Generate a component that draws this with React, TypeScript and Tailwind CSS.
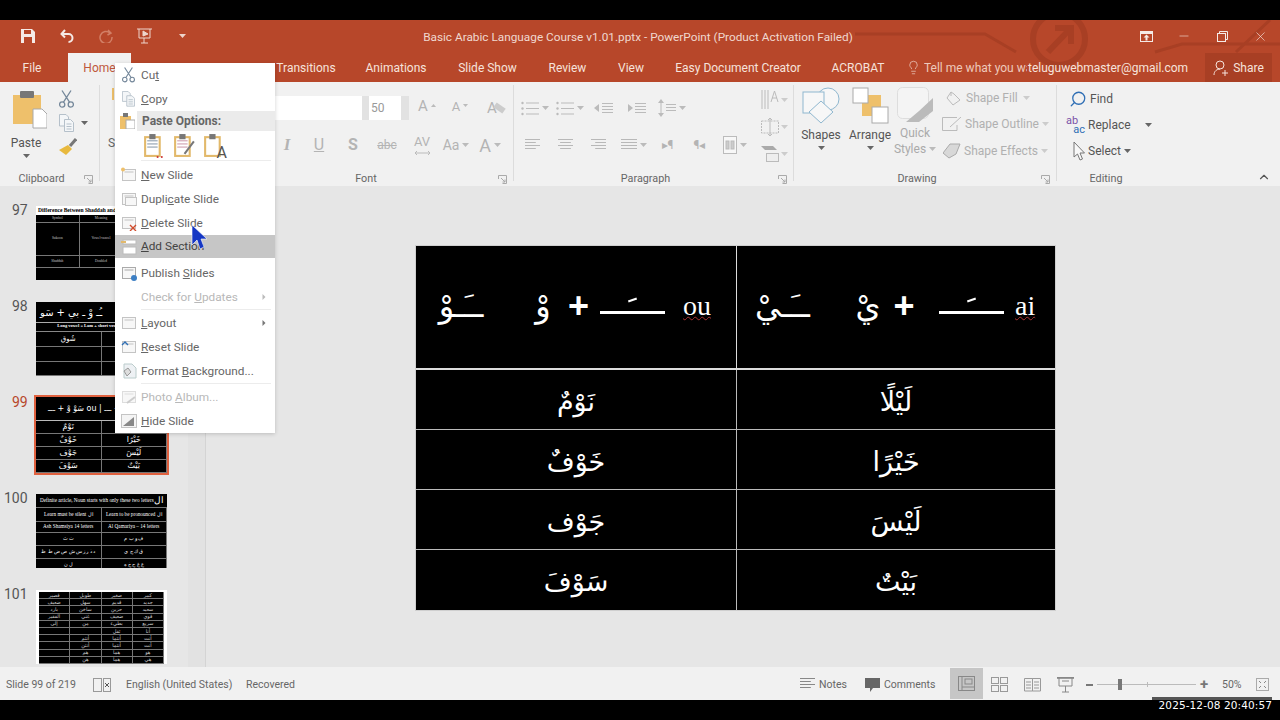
import React from "react";
import { Search, Lightbulb, Minus, X, ChevronUp, ChevronRight } from "lucide-react";

const UI = "[font-family:'Roboto','Open_Sans',sans-serif]";

const Caret = ({ c = "#666" }: { c?: string }) => (
  <svg width="7" height="4" viewBox="0 0 7 4" className="shrink-0"><path d="M0 0h7L3.5 4z" fill={c} /></svg>
);

const Launcher = () => (
  <svg width="9" height="9" viewBox="0 0 9 9" className="shrink-0"><path d="M.5 4V.5H8.5M8.5.5V8.5H4.5M3 3l4 4M4.5 7H7V4.5" fill="none" stroke="#aaa" /></svg>
);

const Lines = ({ w = 16, n = 4, c = "#b8b8b8", gap = 3, align = "left" }: { w?: number; n?: number; c?: string; gap?: number; align?: string }) => (
  <svg width={w} height={n * gap + 1} viewBox={`0 0 ${w} ${n * gap + 1}`}>
    {Array.from({ length: n }).map((_, i) => {
      const l = i % 2 ? w * 0.72 : w;
      const x = align === "right" ? w - l : align === "center" ? (w - l) / 2 : 0;
      return <rect key={i} x={x} y={i * gap} width={align === "full" ? w : l} height="1" fill={c} />;
    })}
  </svg>
);

const Bullets = () => (
  <svg width="18" height="15" viewBox="0 0 18 15" fill="#bbb">
    <circle cx="1.5" cy="2" r="1.2" /><circle cx="1.5" cy="7.5" r="1.2" /><circle cx="1.5" cy="13" r="1.2" />
    <rect x="5" y="1.5" width="13" height="1" /><rect x="5" y="7" width="13" height="1" /><rect x="5" y="12.5" width="13" height="1" />
  </svg>
);

const ScissorsIcon = ({ s = 18 }: { s?: number }) => (
  <svg width={s} height={s * 1.2} viewBox="0 0 15 18" fill="none" stroke="#74879a" strokeWidth="1.3">
    <circle cx="3.2" cy="14.5" r="2.6" /><circle cx="11.8" cy="14.5" r="2.6" />
    <path d="M4.5 12.2L12 .5M10.5 12.2L3 .5" />
  </svg>
);

const CopyIcon = ({ s = 17 }: { s?: number }) => (
  <svg width={s} height={s * 1.2} viewBox="0 0 15 18" fill="#f4f6f8" stroke="#b5c0ca">
    <path d="M.5.5H7L9.5 3V12H.5Z" /><path d="M5.5 5.5H11.5L14.5 8.5V17.5H5.5Z" />
    <path d="M7.5 10H12.5M7.5 12.5H12.5M7.5 15H12.5" />
  </svg>
);

const Clip = ({ children, w = 20, h = 24, fill = "#fff" }: { children?: React.ReactNode; w?: number; h?: number; fill?: string }) => (
  <svg width={w} height={h} viewBox="0 0 20 24">
    <rect x="1" y="4" width="14" height="18" fill={fill} stroke="#e2b96b" strokeWidth="2" />
    <rect x="5" y="1" width="6" height="5" fill="#777" />
    {children}
  </svg>
);

function Tab({ w, children, cls = "" }: { w: string; children: React.ReactNode; cls?: string }) {
  return <div className={`${w} h-full flex items-center justify-center shrink-0 whitespace-nowrap ${cls}`}>{children}</div>;
}

function Header() {
  return (
    <div className="relative h-[62px] bg-[#b7472a] shrink-0 text-[#f6e3dc] overflow-hidden">
      <svg className="absolute left-0 top-0 pointer-events-none" width="1280" height="62" viewBox="0 0 1280 62" fill="none" stroke="#a83f24">
        <path d="M855 14H985L1016 32" strokeWidth="3" />
        <circle cx="1059" cy="19" r="26" strokeWidth="6" />
        <path d="M1048 32L1070 9M1055 8H1071V24" strokeWidth="6" />
        <path d="M1155 32L1182 24H1280M1236 32L1270 0" strokeWidth="3" />
      </svg>
      <div className="relative h-8 flex items-center">
        <div className="w-[56px] flex justify-center">
          <svg width="14" height="14" viewBox="0 0 14 14"><path d="M0 0H11L14 3V14H0Z" fill="#f5eae6" /><rect x="3" y="1" width="7" height="4" fill="#b7472a" /><rect x="3" y="8" width="8" height="6" fill="#b7472a" /></svg>
        </div>
        <div className="w-[22px] flex justify-center">
          <svg width="14" height="14" viewBox="0 0 14 14" fill="none" stroke="#f5eae6" strokeWidth="2"><path d="M5 1L1.5 5 5 8.5M2 5H8.5A4 4 0 0 1 8.5 13" /></svg>
        </div>
        <div className="w-[56px] flex justify-center">
          <svg width="14" height="14" viewBox="0 0 14 14" fill="none" stroke="#d27f66" strokeWidth="1.5"><path d="M9 1L12 4 8.5 6M11 4A6 6 0 1 0 13 8" /></svg>
        </div>
        <div className="w-[22px] flex justify-center">
          <svg width="16" height="16" viewBox="0 0 16 16" fill="none" stroke="#eed5cc"><path d="M0 1H15M2 1V10H13V1M7 10V15M4 15H11" /><path d="M6 3L11 6 6 8Z" fill="#eed5cc" /></svg>
        </div>
        <div className="w-[52px] flex justify-center"><Caret c="#eed5cc" /></div>
        <div className={`absolute left-[403px] w-[470px] top-[9px] text-center text-[11.8px] leading-4 ${UI} text-[#f0d8cf] whitespace-nowrap`}>Basic Arabic Language Course v1.01.pptx - PowerPoint (Product Activation Failed)</div>
        <div className="ml-auto flex items-center pr-[1px]">
          <div className="w-[38px] flex justify-center"><svg width="13" height="11" viewBox="0 0 13 11"><rect x=".5" y=".5" width="12" height="10" fill="none" stroke="#f5eae6" /><rect x="0" y="0" width="13" height="3" fill="#f5eae6" /><path d="M6.5 3.5L9.5 6.5H7.5V9.5H5.5V6.5H3.5Z" fill="#f5eae6" /></svg></div>
          <div className="w-[38px] flex justify-center"><Minus size={14} strokeWidth={1} color="#f5eae6" /></div>
          <div className="w-[38px] flex justify-center"><svg width="11" height="11" viewBox="0 0 11 11" fill="none" stroke="#f5eae6"><rect x=".5" y="2.5" width="8" height="8" /><path d="M2.5 2.5V.5H10.5V8.5H8.5" /></svg></div>
          <div className="w-[38px] flex justify-center"><X size={15} strokeWidth={1} color="#f5eae6" /></div>
        </div>
      </div>
      <div className={`relative h-[30px] flex items-center text-[12px] pt-px ${UI}`}>
        <Tab w="w-[64px]">File</Tab>
        <Tab w="w-[63px]" cls="bg-[#f1f1f1] text-[#c0583c] ml-[4px]">Home</Tab>
        <Tab w="w-[65px]">Insert</Tab>
        <Tab w="w-[66px]">Design</Tab>
        <Tab w="w-[88px]">Transitions</Tab>
        <Tab w="w-[92px]">Animations</Tab>
        <Tab w="w-[91px]">Slide Show</Tab>
        <Tab w="w-[69px]">Review</Tab>
        <Tab w="w-[58px]">View</Tab>
        <Tab w="w-[156px]">Easy Document Creator</Tab>
        <Tab w="w-[84px]">ACROBAT</Tab>
        <div className="ml-[2px] w-[22px] flex justify-center"><Lightbulb size={15} strokeWidth={1} /></div>
        <div className="w-[103px] mr-px whitespace-nowrap overflow-hidden text-[#eec9bc]">Tell me what you want to do</div>
        <div className="w-[177px] whitespace-nowrap">teluguwebmaster@gmail.com</div>
        <div className="w-[67px] h-full bg-[#a83f24] flex items-center justify-center gap-[4px]">
          <svg width="16" height="16" viewBox="0 0 16 16" fill="none" stroke="#f6e3dc"><circle cx="7" cy="5" r="4" /><path d="M1 15C1 11 4 9 7 9.2M9 13H15M12 10V16" /></svg>
          Share
        </div>
      </div>
    </div>
  );
}

const Sep = () => <div className="w-px h-[96px] bg-[#dcdcdc] self-start mt-[3px] shrink-0" />;

function Group({ w, label, children, launcher = true, lcls = "" }: { w: string; label: string; children: React.ReactNode; launcher?: boolean; lcls?: string }) {
  return (
    <div className={`${w} shrink-0 flex flex-col h-full relative`}>
      <div className="h-[91px] flex overflow-hidden">{children}</div>
      <div className={`h-[12px] flex items-center justify-center text-[#666] text-[10.8px] relative ${lcls}`}>
        {label}
        {launcher && <div className="absolute right-[6px] top-[2px]"><Launcher /></div>}
      </div>
    </div>
  );
}

const Dis = ({ children, w, cls = "" }: { children: React.ReactNode; w: string; cls?: string }) => (
  <div className={`${w} h-[26px] flex items-center justify-center gap-[3px] shrink-0 text-[#b4b4b4] ${cls}`}>{children}</div>
);

function Ribbon() {
  return (
    <div className={`h-[104px] bg-[#f1f1f1] flex shrink-0 pb-[1px] ${UI}`}>
      <Group w="w-[99px]" label="Clipboard" lcls="pr-[16px]">
        <div className="w-[59px] flex flex-col items-center pt-2 shrink-0">
          <svg width="34" height="39" viewBox="0 0 34 39"><path d="M0 5H28V34H0Z" fill="#eec06b" /><rect x="7" y="1" width="14" height="7" rx="1" fill="#777" /><path d="M20 19H29L34 24V38H20Z" fill="#fff" stroke="#aaa" /></svg>
          <div className="text-[12px] text-[#555] mt-[6px] leading-4 -ml-[7px]">Paste</div>
          <div className="mt-[3px] -ml-[7px]"><Caret /></div>
        </div>
        <div className="flex flex-col items-start pt-[8px] gap-[6px]">
          <ScissorsIcon s={15} />
          <div className="flex items-center gap-[7px]"><CopyIcon s={15} /><Caret /></div>
          <svg width="18" height="17" viewBox="0 0 18 17"><path d="M0 12L9 7 13 11 7 17Z" fill="#e8b93e" /><path d="M11 8L17 1" stroke="#777" strokeWidth="3" /></svg>
        </div>
      </Group>
      <Sep />
      <Group w="w-[118px]" label="Slides" launcher={false}>
        <div className="pl-2 pt-[5px] text-[#666] text-[12px]">
          <svg width="24" height="20" viewBox="0 0 24 20" fill="none"><path d="M5 1L5 13" stroke="#eec06b" strokeWidth="2" /></svg>
          <div className="mt-[27px]">Slides</div>
        </div>
      </Group>
      <Sep />
      <Group w="w-[294px]" label="Font">
        <div className="flex flex-col pl-[20px] pt-[13px] gap-[11px]">
          <div className="flex items-center h-[26px]">
            <div className="w-[123px] h-[24px] bg-white shrink-0" />
            <div className="w-[7px] h-[24px] bg-[#e2e2e2] shrink-0" />
            <div className="w-[32px] h-[24px] bg-white text-[#999] text-[12px] flex items-center pl-[2px] shrink-0">50</div>
            <div className="w-[8px] h-[24px] bg-[#e2e2e2] shrink-0" />
            <Dis w="w-[36px]" cls="text-[15px] items-end pb-[4px] gap-0">A<span className="mb-[10px]"><svg width="5" height="3" viewBox="0 0 5 3"><path d="M0 3L2.5 0 5 3Z" fill="#bbb" /></svg></span></Dis>
            <Dis w="w-[30px]" cls="text-[13px] items-end pb-[5px] gap-0">A<span className="mb-[9px]"><svg width="5" height="3" viewBox="0 0 5 3"><path d="M0 0L2.5 3 5 0Z" fill="#bbb" /></svg></span></Dis>
            <Dis w="w-[34px]" cls="text-[15px]"><span className="relative">A<span className="absolute left-[7px] top-[8px] w-[11px] h-[6px] bg-[#ccc] rotate-[35deg]" /></span></Dis>
          </div>
          <div className="flex items-center h-[26px]">
            <Dis w="w-[32px]" cls="font-bold text-[15px]">B</Dis>
            <Dis w="w-[32px]" cls="italic font-bold text-[17px] [font-family:'Liberation_Serif',serif]">I</Dis>
            <Dis w="w-[32px]" cls="underline text-[16px]">U</Dis>
            <Dis w="w-[36px]" cls="font-bold text-[16px]">S</Dis>
            <Dis w="w-[32px]" cls="line-through text-[12px]">abc</Dis>
            <Dis w="w-[38px]" cls="text-[13px] flex-col gap-0"><span className="leading-[13px]">AV</span><svg width="17" height="4" viewBox="0 0 17 4" fill="none" stroke="#bbb"><path d="M1 2H16M3 0L1 2 3 4M14 0L16 2 14 4" /></svg></Dis>
            <Dis w="w-[30px]" cls="text-[14px]">Aa<Caret c="#bbb" /></Dis>
            <Dis w="w-[38px]" cls="text-[18px]">A<Caret c="#bbb" /></Dis>
          </div>
        </div>
      </Group>
      <Sep />
      <Group w="w-[279px]" label="Paragraph" lcls="pr-[16px]">
        <div className="w-[247px] shrink-0 flex flex-col pt-[13px] gap-[11px] pl-[3px]">
          <div className="flex items-center h-[26px]">
            <Dis w="w-[36px]"><Bullets /><Caret c="#bbb" /></Dis>
            <Dis w="w-[33px]"><Bullets /><Caret c="#bbb" /></Dis>
            <Dis w="w-[34px]"><svg width="19" height="13" viewBox="0 0 19 13" fill="#bbb"><path d="M0 6L5 2V10Z" /><rect x="8" y="1" width="11" height="1" /><rect x="8" y="4" width="11" height="1" /><rect x="8" y="7" width="11" height="1" /><rect x="8" y="10" width="11" height="1" /></svg></Dis>
            <Dis w="w-[33px]"><svg width="19" height="13" viewBox="0 0 19 13" fill="#bbb"><path d="M6 6L1 2V10Z" /><rect x="8" y="1" width="11" height="1" /><rect x="8" y="4" width="11" height="1" /><rect x="8" y="7" width="11" height="1" /><rect x="8" y="10" width="11" height="1" /></svg></Dis>
            <Dis w="w-[38px]"><svg width="18" height="18" viewBox="0 0 18 18" fill="#bbb"><path d="M3 0L6 4H0ZM3 18L6 14H0Z" /><rect x="2.5" y="3" width="1" height="12" /><rect x="8" y="5" width="10" height="1" /><rect x="8" y="8" width="10" height="1" /><rect x="8" y="11" width="10" height="1" /></svg><Caret c="#bbb" /></Dis>
          </div>
          <div className="flex items-center h-[26px] -ml-px">
            <Dis w="w-[33px]"><Lines w={15} n={4} /></Dis>
            <Dis w="w-[33px]"><Lines w={15} n={4} align="center" /></Dis>
            <Dis w="w-[33px]"><Lines w={15} n={4} align="right" /></Dis>
            <Dis w="w-[37px]"><Lines w={16} n={4} align="full" /><Caret c="#bbb" /></Dis>
            <Dis w="w-[31px]"><span className="text-[12px]">▸¶</span></Dis>
            <Dis w="w-[33px]"><span className="text-[12px]">¶◂</span></Dis>
            <Dis w="w-[37px]"><svg width="14" height="18" viewBox="0 0 14 18" fill="#ccc" stroke="#bbb"><rect x=".5" y=".5" width="13" height="17" fill="#f7f7f7" /><rect x="3" y="5" width="3" height="8" /><rect x="8" y="5" width="3" height="8" /></svg><Caret c="#bbb" /></Dis>
          </div>
        </div>
        <div className="flex flex-col items-start gap-[5px] pt-[7px]">
          <div className="flex items-center gap-[2px] h-[22px]"><svg width="18" height="20" viewBox="0 0 18 20" stroke="#bbb" fill="none"><path d="M1 0V19M4 0V19M7 0V19" /><path d="M10 12L13.5 1 17 12M11 8H16" /></svg><Caret c="#ccc" /></div>
          <div className="flex items-center gap-[2px] h-[22px]"><svg width="18" height="20" viewBox="0 0 18 20" fill="none" stroke="#bbb"><rect x=".5" y="4" width="17" height="12" strokeDasharray="2 1" /><path d="M9 1V19M7 3L9 1 11 3M7 17L9 19 11 17" /></svg><Caret c="#ccc" /></div>
          <div className="flex items-center gap-[2px] h-[22px]"><svg width="18" height="16" viewBox="0 0 18 16"><path d="M0 0H12L16 4H4Z" fill="#aaa" /><rect x="5.5" y="7.5" width="12" height="8" fill="#eee" stroke="#bbb" /></svg><Caret c="#ccc" /></div>
        </div>
      </Group>
      <Sep />
      <Group w="w-[262px]" label="Drawing" lcls="pr-[16px]">
        <div className="w-[54px] flex flex-col items-center pt-[5px] text-[#555] text-[12px] shrink-0">
          <svg width="38" height="37" viewBox="0 0 38 37" fill="#f7f7f7" stroke="#8fb7cf"><circle cx="26" cy="12" r="11" /><rect x="1" y="5" width="21" height="21" /><path d="M19 14L31 25 19 36 7 25Z" /></svg>
          <div className="leading-4 mt-[3px]">Shapes</div>
          <div className="mt-[3px]"><Caret /></div>
        </div>
        <div className="w-[40px] ml-[2px] flex flex-col items-center pt-[5px] text-[#555] text-[12px] shrink-0">
          <svg width="37" height="37" viewBox="0 0 37 37" className="shrink-0"><rect x="10" y="8" width="19" height="21" fill="#eec06b" /><rect x="1" y="1" width="15" height="15" fill="#fff" stroke="#aaa" /><rect x="20" y="20" width="16" height="16" fill="#fff" stroke="#aaa" /></svg>
          <div className="leading-4 mt-[3px]">Arrange</div>
          <div className="mt-[3px]"><Caret /></div>
        </div>
        <div className="w-[46px] ml-[2px] flex flex-col items-center pt-[5px] text-[#aaa] text-[12px] shrink-0">
          <svg width="36" height="35" viewBox="0 0 36 35"><rect x=".5" y=".5" width="31" height="31" rx="5" fill="#f4f4f4" stroke="#ddd" /><path d="M9 35L22 24 36 11V24L22 35Z" fill="#bbb" /></svg>
          <div className="leading-4 mt-[3px]">Quick</div>
          <div className="leading-4 flex items-center gap-[3px]">Styles<Caret c="#bbb" /></div>
        </div>
        <div className="flex flex-col pl-[8px] pt-[3px] text-[#b0b0b0] text-[12px] whitespace-nowrap">
          <div className="h-[26px] flex items-center gap-[5px]"><svg width="15" height="15" viewBox="0 0 15 15" fill="none" stroke="#bbb"><path d="M5 1L1 7 7 14 14 9 8 3ZM5 1V5" /></svg>Shape Fill<Caret c="#ccc" /></div>
          <div className="h-[26px] flex items-center gap-[3px] -ml-[4px]"><svg width="20" height="14" viewBox="0 0 20 14" fill="none" stroke="#bbb"><path d="M15 .5H.5V13.5H15V8M8 10L19 0" /></svg>Shape Outline<Caret c="#ccc" /></div>
          <div className="h-[28px] flex items-center gap-[3px] -ml-[3px]"><svg width="18" height="16" viewBox="0 0 18 16"><path d="M0 10L7 1H17L13 11 6 15Z" fill="#d8d8d8" stroke="#aaa" /></svg>Shape Effects<Caret c="#ccc" /></div>
        </div>
      </Group>
      <Sep />
      <Group w="w-[98px]" label="Editing" launcher={false}>
        <div className="flex flex-col pl-[9px] pt-[4px] text-[#555] text-[12px] whitespace-nowrap">
          <div className="h-[26px] flex items-center gap-[3px] pl-[3px]"><Search size={18} color="#2f6fb5" className="-scale-x-100" strokeWidth={1.7} />Find</div>
          <div className="h-[26px] flex items-center gap-[3px]">
            <div className="w-[19px] leading-[9px] text-[11px]"><div className="text-[#7b52a8]">ab</div><div className="text-[#2f6fb5] text-right">ac</div></div>
            Replace<div className="ml-[11px]"><Caret /></div>
          </div>
          <div className="h-[26px] flex items-center gap-[3px] pl-[7px]"><svg width="12" height="20" viewBox="0 0 12 20" fill="#f8f8f8" stroke="#777"><path d="M1 1V16L4.5 13 7 19 9.5 18 7 12H11.5Z" /></svg>Select<Caret /></div>
        </div>
      </Group>
      <div className="flex-1 flex items-end justify-end pr-[9px] pb-[1px]"><ChevronUp size={14} color="#555" /></div>
    </div>
  );
}

const AR = "[font-family:'DejaVu_Sans',sans-serif]";
const SER = "[font-family:'Liberation_Serif',serif]";

function Mini({ rows, cols, cls, rowH }: { rows: string[][]; cols: number; cls: string; rowH: string }) {
  return (
    <div className={`grid ${cols === 4 ? "grid-cols-4" : cols === 3 ? "grid-cols-3" : "grid-cols-2"} ${rowH} ${cls}`}>
      {rows.flat().map((t, i) => (
        <div key={i} className="border-r border-b border-[#777] flex items-center justify-center overflow-hidden whitespace-nowrap leading-none">{t}</div>
      ))}
    </div>
  );
}

function ThumbItem({ n, children, sel = false }: { n: number; children: React.ReactNode; sel?: boolean }) {
  return (
    <div className="h-[96px] flex shrink-0 items-start">
      <div className={`w-[36px] text-[14px] leading-[14px] -mt-[3px] ${n > 99 ? "pl-[4px]" : "pl-[12px]"} ${sel ? "text-[#b7472a]" : "text-[#555]"}`}>{n}</div>
      <div className={`w-[131px] bg-black overflow-hidden text-white ${sel ? "outline-2 outline-[#e0613f] -mt-[1px] h-[76px]" : "h-[74px]"}`}>{children}</div>
    </div>
  );
}

function Panel() {
  return (
    <div className={`w-[206px] shrink-0 border-r border-[#d4d4d4] flex h-full ${UI}`}>
      <div className="w-[188px] pt-[20px] flex flex-col overflow-hidden h-full">
        <ThumbItem n={97}>
          <div className={`bg-white h-[9px] text-black text-[5.5px] font-bold pl-[2px] whitespace-nowrap leading-[9px] ${SER}`}>Difference Between Shaddah and Sukoon</div>
          <Mini cols={3} cls={`text-[3.5px] text-[#ccc] ${SER}`} rowH="grid-rows-[8px_33px_12px]" rows={[["Symbol", "Meaning", "Pronunciation"], ["Sukoon", "Vowel-cancel", "—"], ["Shaddah", "Doubled", "twice"]]} />
        </ThumbItem>
        <ThumbItem n={98}>
          <div className={`h-[21px] flex items-center gap-[3px] text-[10px] pl-[4px] border-b border-[#aaa] ${AR}`}>سَو<span>+</span>ـُـ وْ ـ بي</div>
          <div className={`text-[4.5px] h-[9px] text-center border-b border-[#888] font-bold whitespace-nowrap ${SER}`}>Long vowel = Lam + short vowel Waw + Noon</div>
          <Mini cols={2} cls={`text-[7px] ${AR}`} rowH="grid-rows-[15px_15px_14px_10px]" rows={[["شُوق", "فِي"], ["", "خَطِيب"], ["", ""], ["قَم", "قَم"]]} />
        </ThumbItem>
        <ThumbItem n={99} sel>
          <div className={`h-[24px] flex items-center justify-center text-[8px] border-b border-[#bbb] gap-[2px] whitespace-nowrap ${AR}`}>سَوْ وْ + ـــ ou | سَيْ يْ + ـــ ai</div>
          <Mini cols={2} cls={`text-[8px] ${AR}`} rowH="grid-rows-[13px_13px_13px_13px]" rows={[["نَوْمٌ", "لَيْلًا"], ["خَوْفٌ", "خَيْرًا"], ["جَوْف", "لَيْسَ"], ["سَوْفَ", "بَيْتٌ"]]} />
        </ThumbItem>
        <ThumbItem n={100}>
          <div className={`h-[14px] flex items-center justify-between px-[4px] text-[5.2px] border-b border-[#777] whitespace-nowrap ${SER}`}>Definite article, Noun starts with only these two letters<span className="text-[9px]">ال</span></div>
          <Mini cols={2} cls={`text-[5.2px] ${SER}`} rowH="grid-rows-[14px_11px_13px_13px_13px]" rows={[["Learn must be silent  ال", "Learn to be pronounced  ال"], ["Ash Shamsiya 14 letters", "Al Qamariya – 14 letters"], ["ت ث", "ف و ب م"], ["د ذ ر ز س ش ص ض ط ظ", "ق ك ج ي"], ["ل ن", "ع غ ح خ ه"]]} />
        </ThumbItem>
        <ThumbItem n={101}>
          <div className="bg-white w-[131px] h-[74px] px-[3px] pt-[2px]">
            <Mini cols={4} cls={`bg-black text-[#ccc] text-[5px] h-[72px] ${AR}`} rowH="grid-rows-10" rows={[["قصير", "طويل", "صغير", "كبير"], ["ضعيف", "سهل", "قديم", "جديد"], ["بارد", "ساخن", "حزين", "سعيد"], ["الفقير", "غني", "ضعيف", "قوي"], ["إلى", "من", "بطيء", "سريع"], ["", "", "ثقل", "أنا"], ["", "أنتم", "أنتما", "أنت"], ["", "أنتن", "أنتما", "أنت"], ["", "هم", "هما", "هو"], ["", "هن", "هما", "هي"]]} />
          </div>
        </ThumbItem>
      </div>
      <div className="w-[17px] bg-[#e2e2e2]" />
    </div>
  );
}

const Ar = ({ w, children, cls = "" }: { w: string; children: React.ReactNode; cls?: string }) => (
  <span className={`${w} shrink-0 text-center whitespace-nowrap ${cls}`}>{children}</span>
);

const Bar = () => (
  <span className="w-[65px] shrink-0 flex flex-col items-center">
    <span className="w-[9px] h-[2px] bg-white -rotate-[20deg] mb-[10px]" />
    <span className="w-[65px] h-[3px] bg-white" />
  </span>
);

function Slide() {
  const cell = `flex items-center justify-center text-white text-[27px] pt-[5px] ${AR}`;
  return (
    <div className="w-[639px] h-[364px] bg-black grid grid-cols-[321px_318px] grid-rows-[124px_60px_60px_60px_60px] shadow-[0_0_0_1px_#cfcfcf] text-white">
      <div className="border-r border-b-2 border-[#dcdcdc] flex items-center pl-[20px] pb-[2px] text-[32px] leading-none">
        <Ar w="w-[50px]" cls={AR}>ــَـوْ</Ar>
        <Ar w="w-[32px]"> </Ar>
        <Ar w="w-[50px]" cls={AR}>وْ</Ar>
        <Ar w="w-[16px]" cls="font-bold [font-family:'Liberation_Sans',sans-serif] text-[36px]">+</Ar>
        <span className="w-[16px] shrink-0" />
        <Bar />
        <span className="w-[18px] shrink-0" />
        <span className={`text-[28px] underline decoration-wavy decoration-[#a33] decoration-1 ${SER}`}>ou</span>
      </div>
      <div className="border-b-2 border-[#dcdcdc] flex items-center pl-[18px] pb-[2px] text-[32px] leading-none">
        <Ar w="w-[50px]" cls={AR}>ــَـيْ</Ar>
        <Ar w="w-[38px]"> </Ar>
        <Ar w="w-[50px]" cls={AR}>يْ</Ar>
        <Ar w="w-[22px]" cls="font-bold [font-family:'Liberation_Sans',sans-serif] text-[36px]">+</Ar>
        <span className="w-[24px] shrink-0" />
        <Bar />
        <span className="w-[11px] shrink-0" />
        <span className={`text-[28px] underline decoration-wavy decoration-[#a33] decoration-1 ${SER}`}>ai</span>
      </div>
      <div className={`${cell} border-r border-b border-[#bbb]`}>نَوْمٌ</div>
      <div className={`${cell} border-b border-[#bbb]`}>لَيْلًا</div>
      <div className={`${cell} border-r border-b border-[#bbb]`}>خَوْفٌ</div>
      <div className={`${cell} border-b border-[#bbb]`}>خَيْرًا</div>
      <div className={`${cell} border-r border-b border-[#bbb]`}>جَوْف</div>
      <div className={`${cell} border-b border-[#bbb]`}>لَيْسَ</div>
      <div className={`${cell} border-r border-[#bbb]`}>سَوْفَ</div>
      <div className={cell}>بَيْتٌ</div>
    </div>
  );
}

function Item({ icon, children, hi = false, dis = false, arrow = false, h = "h-6" }: { icon?: React.ReactNode; children: React.ReactNode; hi?: boolean; dis?: boolean; arrow?: boolean; h?: string }) {
  return (
    <div className={`${h} flex items-center shrink-0 ${hi ? "bg-[#c6c6c6]" : ""}`}>
      <div className="w-[26px] flex justify-center shrink-0 pl-[1px]">{icon}</div>
      <div className={`flex-1 text-[11.8px] pt-px whitespace-nowrap ${dis ? "text-[#b8b8b8]" : hi ? "text-[#444]" : "text-[#666]"}`}>{children}</div>
      {arrow && <ChevronRight size={12} strokeWidth={0} fill={dis ? "#bbb" : "#777"} className="mr-[5px]" />}
    </div>
  );
}

const Doc = ({ c = "#c4c4c4", children }: { c?: string; children?: React.ReactNode }) => (
  <svg width="16" height="16" viewBox="0 0 16 16" fill="none"><rect x="1.5" y="2.5" width="13" height="11" fill="#f7f7f7" stroke={c} /><rect x="3.5" y="4.5" width="9" height="1" fill={c} />{children}</svg>
);

const Thin = () => <div className="h-px bg-[#ececec] ml-[26px] mr-[4px] mb-px shrink-0" />;

function Menu() {
  return (
    <div className={`absolute left-[115px] top-[63px] w-[160px] h-[370px] bg-white shadow-[0_1px_4px_rgba(0,0,0,0.18)] flex flex-col ${UI}`}>
      <Item icon={<ScissorsIcon s={13} />}>Cu<u>t</u></Item>
      <Item icon={<CopyIcon s={13} />}>
        <u>C</u>opy
      </Item>
      <div className="h-[20px] flex items-center shrink-0">
        <div className="w-[22px] flex justify-center pl-[2px]"><svg width="15" height="16" viewBox="0 0 15 16"><rect x="0" y="3" width="11" height="13" fill="#eec06b" /><rect x="3" y="0" width="5" height="4" fill="#777" /><rect x="6" y="7" width="9" height="9" fill="#fff" stroke="#aaa" /></svg></div>
        <div className="flex-1 h-full bg-[#ebebeb] flex items-center pl-[5px] text-[12px] font-bold text-[#666]">Paste Options:</div>
      </div>
      <div className="h-[29px] flex items-center pl-[29px] gap-[9px] shrink-0 relative">
        <Clip w={21} h={25}><rect x="3" y="7" width="10" height="1" fill="#89a" /><rect x="3" y="10" width="10" height="1" fill="#89a" /><rect x="3" y="13" width="10" height="1" fill="#89a" /><circle cx="13" cy="23" r="1" fill="#c33" /><circle cx="17" cy="23" r="1" fill="#c33" /></Clip>
        <Clip w={21} h={25}><rect x="3" y="7" width="10" height="1" fill="#c9a" /><rect x="3" y="10" width="10" height="1" fill="#c9a" /><rect x="3" y="13" width="10" height="1" fill="#c9a" /><path d="M10 20L19 8" stroke="#777" strokeWidth="2" /></Clip>
        <div className="relative"><Clip w={21} h={25} /><span className="absolute right-[-2px] bottom-[-3px] text-[16px] text-[#555] leading-none">A</span></div>
      </div>
      <div className="h-px bg-[#ececec] ml-[26px] mr-[4px] mb-[2px] shrink-0" />
      <Item icon={<Doc><circle cx="2" cy="2.5" r="2" fill="#eec06b" /></Doc>}><u>N</u>ew Slide</Item>
      <Item icon={<Doc><rect x="4.5" y="6.5" width="11" height="8" fill="#f7f7f7" stroke="#c4c4c4" /></Doc>}>Dupli<u>c</u>ate Slide</Item>
      <Item icon={<Doc><path d="M9 10L15 16M15 10L9 16" stroke="#d14b2c" strokeWidth="1.4" /></Doc>}><u>D</u>elete Slide</Item>
      <Item hi h="h-[23px]" icon={<svg width="16" height="16" viewBox="0 0 16 16"><rect x="2" y="1" width="13" height="4" fill="#fff" stroke="#bbb" /><rect x="2" y="8" width="13" height="7" fill="#fff" stroke="#bbb" /><rect x="0" y="2" width="5" height="2" fill="#e2b96b" /></svg>}><u>A</u>dd Section</Item>
      <div className="h-[3px] shrink-0" />
      <Item icon={<Doc c="#aaa"><circle cx="13" cy="13" r="3" fill="#3d7fc4" /></Doc>}>Publish <u>S</u>lides</Item>
      <Item dis arrow icon={null}>Check for <u>U</u>pdates</Item>
      <Thin />
      <Item arrow icon={<Doc />}><u>L</u>ayout</Item>
      <Item icon={<Doc><path d="M1 6L4 3 7 6" stroke="#2f6fb5" fill="none" strokeWidth="1.4" /></Doc>}><u>R</u>eset Slide</Item>
      <Item icon={<svg width="16" height="16" viewBox="0 0 16 16"><path d="M3 1H11L15 5V15H3Z" fill="#eef1f4" stroke="#bcc" /><path d="M3 8L7 5 10 9 6 13Z" fill="#ddd" stroke="#999" /></svg>}>Format <u>B</u>ackground...</Item>
      <Thin />
      <Item dis icon={<Doc c="#ddd"><path d="M6 14L14 8" stroke="#ccc" strokeWidth="2" /></Doc>}>Photo <u>A</u>lbum...</Item>
      <Item icon={<svg width="16" height="14" viewBox="0 0 16 14"><rect x=".5" y=".5" width="15" height="13" fill="#f4f4f4" stroke="#c4c4c4" /><path d="M2 12L13 3V12Z" fill="#888" /></svg>}><u>H</u>ide Slide</Item>
    </div>
  );
}

function Status() {
  return (
    <div className={`h-[33px] bg-[#f1f1f1] shrink-0 flex items-center text-[10.5px] text-[#666] pt-[2px] ${UI}`}>
      <div className="w-[93px] pl-[6px] whitespace-nowrap">Slide 99 of 219</div>
      <svg width="18" height="14" viewBox="0 0 18 14" fill="none" stroke="#999"><rect x=".5" y=".5" width="8" height="13" /><rect x="10.5" y=".5" width="7" height="13" /><path d="M12 5L16 9M16 5L12 9" stroke="#555" /></svg>
      <div className="ml-[15px] w-[120px] whitespace-nowrap">English (United States)</div>
      <div className="whitespace-nowrap">Recovered</div>
      <div className="ml-auto flex items-center h-full">
        <Lines w={15} n={4} gap={3} c="#888" />
        <div className="ml-[4px] w-[46px]">Notes</div>
        <svg width="15" height="14" viewBox="0 0 15 14"><path d="M0 0H15V10H8L5 14V10H0Z" fill="#666" /></svg>
        <div className="ml-[4px] w-[66px] whitespace-nowrap">Comments</div>
        <div className="w-[33px] h-full -mt-[2px] bg-[#c6c6c6] flex items-center justify-center"><svg width="17" height="15" viewBox="0 0 17 15" fill="none" stroke="#888"><rect x=".5" y=".5" width="16" height="14" /><path d="M4 .5V14.5M4 11H16" /><rect x="7" y="3" width="7" height="5" /></svg></div>
        <div className="w-[33px] flex justify-center"><svg width="17" height="15" viewBox="0 0 17 15" fill="none" stroke="#999"><rect x=".5" y=".5" width="7" height="6" /><rect x="9.5" y=".5" width="7" height="6" /><rect x=".5" y="8.5" width="7" height="6" /><rect x="9.5" y="8.5" width="7" height="6" /></svg></div>
        <div className="w-[33px] flex justify-center"><svg width="17" height="15" viewBox="0 0 17 15" fill="none" stroke="#999"><path d="M.5 1.5H8.5V14H.5ZM8.5 1.5H16.5V14H8.5ZM2 5H7M2 8H7M2 11H7M10 5H15M10 8H15M10 11H15" /></svg></div>
        <div className="w-[33px] flex justify-center"><svg width="17" height="16" viewBox="0 0 17 16" fill="none" stroke="#888"><path d="M0 .8H17" strokeWidth="2" /><path d="M2 1V9H15V1M8.5 9V15M5 15H12M5 4H12" /></svg></div>
        <div className="ml-[4px] w-[7px] h-[2px] bg-[#777]" />
        <div className="ml-[4px] w-[99px] h-px bg-[#bbb] relative">
          <div className="absolute left-[21px] top-[-5px] w-[4px] h-[11px] bg-[#777]" />
          <div className="absolute left-[50px] top-[-2px] w-px h-[5px] bg-[#bbb]" />
        </div>
        <div className="ml-[2px] text-[15px] font-bold text-[#777] w-[12px] text-center leading-none">+</div>
        <div className="ml-[12px] w-[31px] whitespace-nowrap">50%</div>
        <svg className="ml-[3px] mr-[11px]" width="13" height="13" viewBox="0 0 13 13" fill="none" stroke="#aaa"><rect x=".5" y=".5" width="12" height="12" /><path d="M3 3L5 5M10 3L8 5M3 10L5 8M10 10L8 8" stroke="#888" /></svg>
      </div>
    </div>
  );
}

export default function App() {
  return (
    <div className="relative w-[1280px] h-[720px] bg-black overflow-hidden flex flex-col">
      <div className="h-5 shrink-0" />
      <Header />
      <Ribbon />
      <div className="h-[481px] bg-[#e6e6e6] flex shrink-0 overflow-hidden">
        <Panel />
        <div className="flex-1 pl-[210px] pt-[60px]"><Slide /></div>
      </div>
      <Status />
      <div className="flex-1" />
      <Menu />
      <svg className="absolute left-[191px] top-[225px]" width="16" height="25" viewBox="0 0 16 25"><path d="M1 0V20L6 15 9 24 13 22 10 14H16Z" fill="#1537c4" stroke="#fff" strokeWidth=".6" /></svg>
      <div className="absolute right-[8px] top-[697px] w-[120px] h-[3px] bg-[#555]" />
      <div className="absolute right-[8px] top-[698px] text-[10.5px] text-white [font-family:'DejaVu_Sans',sans-serif] tracking-[0.1px] whitespace-nowrap">2025-12-08 20:40:57</div>
    </div>
  );
}
